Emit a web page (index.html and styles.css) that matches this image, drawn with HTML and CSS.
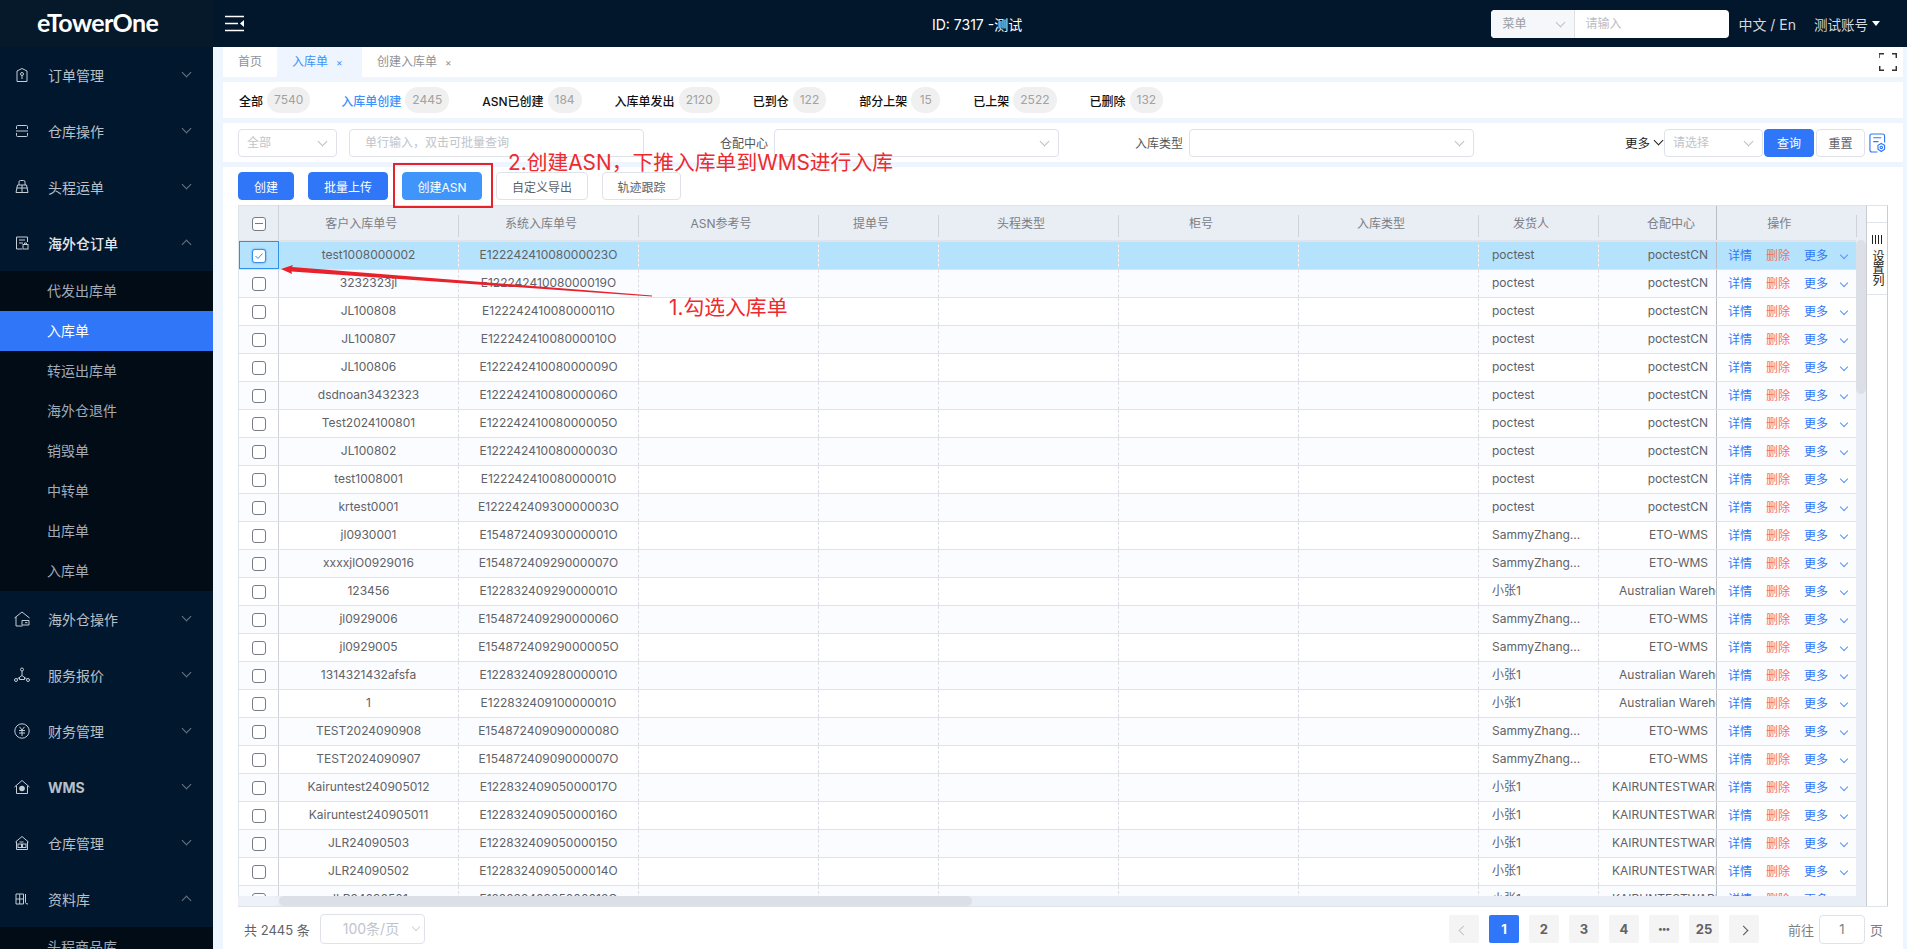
FILE: index.html
```html
<!DOCTYPE html>
<html lang="zh-CN">
<head>
  <meta charset="UTF-8">
  <title>入库单</title>
  <link rel="stylesheet" href="styles.css">
</head>
<body>
<div class="app">
  <aside class="sidebar">
    <div class="logo">eTowerOne</div>
    <ul class="menu">
      <li class="item"><svg class="ico" viewBox="0 0 16 16"><path d="M3 4 8 1.5 13 4V14.5H3Z"/><circle cx="8" cy="7" r="1.5"/><path d="M8 8.5V12"/></svg><span>订单管理</span><i class="arrow"></i></li>
      <li class="item"><svg class="ico" viewBox="0 0 16 16"><path d="M2.500 6V3.500Q2.500 2.500 3.500 2.500H12.500Q13.500 2.500 13.500 3.500V6M2 8H14M2.500 10V12.500Q2.500 13.500 3.500 13.500H12.500Q13.500 13.500 13.500 12.500V10"/></svg><span>仓库操作</span><i class="arrow"></i></li>
      <li class="item"><svg class="ico" viewBox="0 0 16 16"><path d="M5 6V3Q5 1.500 6.500 1.500H9.500Q11 1.500 11 3V6M3.500 6H12.500L14 13.500H2ZM8 6V13.500M2.500 9H13.500"/></svg><span>头程运单</span><i class="arrow"></i></li>
      <li class="item open"><svg class="ico" viewBox="0 0 16 16"><path d="M8 14H2.500V2H13.500V7M5 5H11M5 8H9"/><rect x="9" y="9.500" width="5" height="4.500"/><path d="M10.500 9.500V8H12.500V9.500"/></svg><span>海外仓订单</span><i class="arrow up"></i></li>
      <li class="sub">
        <a>代发出库单</a>
        <a class="active">入库单</a>
        <a>转运出库单</a>
        <a>海外仓退件</a>
        <a>销毁单</a>
        <a>中转单</a>
        <a>出库单</a>
        <a>入库单</a>
      </li>
      <li class="item"><svg class="ico" viewBox="0 0 16 16"><path d="M.500 7 8 1 15.500 7M2 6V15H8.500M8 9.500H15V14H8ZM11 11.700H13.500"/></svg><span>海外仓操作</span><i class="arrow"></i></li>
      <li class="item"><svg class="ico" viewBox="0 0 16 16"><circle cx="8" cy="2.500" r="1.500"/><circle cx="2" cy="13" r="1.500"/><circle cx="14" cy="13" r="1.500"/><path d="M8 4V8.500L3.300 12M8 8.500 12.700 12M5.500 10V12.500H10.500V10"/></svg><span>服务报价</span><i class="arrow"></i></li>
      <li class="item"><svg class="ico" viewBox="0 0 16 16"><circle cx="8" cy="8" r="7.200"/><path d="M5.500 3.800 8 7 10.500 3.800M5 7.500H11M5 10H11M8 7V13"/></svg><span>财务管理</span><i class="arrow"></i></li>
      <li class="item wms"><svg class="ico" viewBox="0 0 16 16"><path d="M.500 8 8 1.500 15.500 8M2.500 7V14.500H13.500V7"/><circle class="fill" cx="8" cy="9.500" r="2.800"/></svg><span>WMS</span><i class="arrow"></i></li>
      <li class="item"><svg class="ico" viewBox="0 0 16 16"><path d="M1.500 7 8 1.500 14.500 7M2.500 6.500V14.500H13.500V6.500M5.500 7H9.500"/><rect x="4" y="9" width="3.500" height="3.500"/><rect x="8.500" y="9" width="3.500" height="3.500"/></svg><span>仓库管理</span><i class="arrow"></i></li>
      <li class="item open"><svg class="ico" viewBox="0 0 16 16"><path d="M2 3H9.500V13H2ZM5.700 3V13M2 8H9.500M11.500 3V11.500Q11.500 13 14 13"/></svg><span>资料库</span><i class="arrow up"></i></li>
      <li class="sub"><a>头程商品库</a></li>
    </ul>
  </aside>

  <div class="main">
    <header class="head">
      <svg class="toggle" viewBox="0 0 19 17"><path d="M0 1.500H19M0 8.500H13M0 15.500H19"/><path class="solid" d="M19 5V12L15 8.500Z"/></svg>
      <div class="head-title">ID: 7317 -测试</div>
      <div class="head-search">
        <div class="hs-select">菜单<i class="arrow grey"></i></div>
        <div class="hs-input">请输入</div>
      </div>
      <div class="lang">中文 / En</div>
      <div class="account">测试账号<i class="caret"></i></div>
    </header>

    <div class="content">
      <div class="tabs">
        <a class="tab home">首页</a>
        <a class="tab on">入库单<b>×</b></a>
        <a class="tab">创建入库单<b>×</b></a>
        <svg class="full" viewBox="0 0 18 18"><path d="M0 5V.7H5M13 .7H17.300V5M17.300 13V17.300H13M5 17.300H.7V13"/></svg>
      </div>

      <div class="status">
        <div class="st"><span>全部</span><em>7540</em></div>
        <div class="st on"><span>入库单创建</span><em>2445</em></div>
        <div class="st"><span>ASN已创建</span><em>184</em></div>
        <div class="st"><span>入库单发出</span><em>2120</em></div>
        <div class="st"><span>已到仓</span><em>122</em></div>
        <div class="st"><span>部分上架</span><em>15</em></div>
        <div class="st"><span>已上架</span><em>2522</em></div>
        <div class="st"><span>已删除</span><em>132</em></div>
      </div>

      <div class="filter">
        <div class="field f-all ph">全部<i class="arrow grey"></i></div>
        <div class="field f-input ph">单行输入，双击可批量查询</div>
        <label class="f-label">仓配中心</label>
        <div class="field f-wide"><i class="arrow grey"></i></div>
        <label class="f-label">入库类型</label>
        <div class="field f-wide"><i class="arrow grey"></i></div>
        <div class="f-more">更多<i class="arrow dark"></i></div>
        <div class="field f-sel ph">请选择<i class="arrow grey"></i></div>
        <button class="btn primary f-q">查询</button>
        <button class="btn f-r">重置</button>
        <svg class="f-cfg" viewBox="0 0 18 21"><path d="M9 20H3Q1 20 1 18V3Q1 1 3 1H14Q16.500 1 16.500 3V10"/><path d="M4.500 5H13M4.500 9H10"/><path d="M13 11 16.500 13V17L13 19.500 9.500 17V13Z"/><circle cx="13" cy="15.200" r="1.300"/></svg>
      </div>

      <div class="panel">
        <div class="actions">
          <button class="btn primary a1">创建</button>
          <button class="btn primary a2">批量上传</button>
          <button class="btn light a3">创建ASN</button>
          <button class="btn a4">自定义导出</button>
          <button class="btn a5">轨迹跟踪</button>
        </div>

        <div class="grid-box">
          <div class="grid">
            <table>
              <colgroup>
                <col class="w-check"><col class="w-180"><col class="w-180"><col class="w-180"><col class="w-120"><col class="w-180"><col class="w-180"><col class="w-180"><col class="w-120"><col class="w-118"><col class="w-ops">
              </colgroup>
              <thead>
                <tr><th class="c-check"><span class="cb minus"></span></th><th>客户入库单号</th><th>系统入库单号</th><th>ASN参考号</th><th>提单号</th><th>头程类型</th><th>柜号</th><th>入库类型</th><th>发货人</th><th class="c-wh">仓配中心</th><th class="c-ops">操作</th></tr>
              </thead>
              <tbody>
                <tr class="sel"><td class="c-check"><span class="cb checked"><svg viewBox="0 0 14 14"><path d="M3.500 7 6 9.500 10.500 4.500"/></svg></span></td><td>test1008000002</td><td>E12224241008000023O</td><td></td><td></td><td></td><td></td><td></td><td class="c-left">poctest</td><td class="c-right">poctestCN</td><td class="c-ops"><a>详情</a><a class="del">删除</a><a>更多</a><i class="arrow blue"></i></td></tr>
                <tr><td class="c-check"><span class="cb"></span></td><td>3232323jl</td><td>E12224241008000019O</td><td></td><td></td><td></td><td></td><td></td><td class="c-left">poctest</td><td class="c-right">poctestCN</td><td class="c-ops"><a>详情</a><a class="del">删除</a><a>更多</a><i class="arrow blue"></i></td></tr>
                <tr><td class="c-check"><span class="cb"></span></td><td>JL100808</td><td>E12224241008000011O</td><td></td><td></td><td></td><td></td><td></td><td class="c-left">poctest</td><td class="c-right">poctestCN</td><td class="c-ops"><a>详情</a><a class="del">删除</a><a>更多</a><i class="arrow blue"></i></td></tr>
                <tr><td class="c-check"><span class="cb"></span></td><td>JL100807</td><td>E12224241008000010O</td><td></td><td></td><td></td><td></td><td></td><td class="c-left">poctest</td><td class="c-right">poctestCN</td><td class="c-ops"><a>详情</a><a class="del">删除</a><a>更多</a><i class="arrow blue"></i></td></tr>
                <tr><td class="c-check"><span class="cb"></span></td><td>JL100806</td><td>E12224241008000009O</td><td></td><td></td><td></td><td></td><td></td><td class="c-left">poctest</td><td class="c-right">poctestCN</td><td class="c-ops"><a>详情</a><a class="del">删除</a><a>更多</a><i class="arrow blue"></i></td></tr>
                <tr><td class="c-check"><span class="cb"></span></td><td>dsdnoan3432323</td><td>E12224241008000006O</td><td></td><td></td><td></td><td></td><td></td><td class="c-left">poctest</td><td class="c-right">poctestCN</td><td class="c-ops"><a>详情</a><a class="del">删除</a><a>更多</a><i class="arrow blue"></i></td></tr>
                <tr><td class="c-check"><span class="cb"></span></td><td>Test2024100801</td><td>E12224241008000005O</td><td></td><td></td><td></td><td></td><td></td><td class="c-left">poctest</td><td class="c-right">poctestCN</td><td class="c-ops"><a>详情</a><a class="del">删除</a><a>更多</a><i class="arrow blue"></i></td></tr>
                <tr><td class="c-check"><span class="cb"></span></td><td>JL100802</td><td>E12224241008000003O</td><td></td><td></td><td></td><td></td><td></td><td class="c-left">poctest</td><td class="c-right">poctestCN</td><td class="c-ops"><a>详情</a><a class="del">删除</a><a>更多</a><i class="arrow blue"></i></td></tr>
                <tr><td class="c-check"><span class="cb"></span></td><td>test1008001</td><td>E12224241008000001O</td><td></td><td></td><td></td><td></td><td></td><td class="c-left">poctest</td><td class="c-right">poctestCN</td><td class="c-ops"><a>详情</a><a class="del">删除</a><a>更多</a><i class="arrow blue"></i></td></tr>
                <tr><td class="c-check"><span class="cb"></span></td><td>krtest0001</td><td>E12224240930000003O</td><td></td><td></td><td></td><td></td><td></td><td class="c-left">poctest</td><td class="c-right">poctestCN</td><td class="c-ops"><a>详情</a><a class="del">删除</a><a>更多</a><i class="arrow blue"></i></td></tr>
                <tr><td class="c-check"><span class="cb"></span></td><td>jl0930001</td><td>E15487240930000001O</td><td></td><td></td><td></td><td></td><td></td><td class="c-left">SammyZhang...</td><td class="c-right">ETO-WMS</td><td class="c-ops"><a>详情</a><a class="del">删除</a><a>更多</a><i class="arrow blue"></i></td></tr>
                <tr><td class="c-check"><span class="cb"></span></td><td>xxxxjlO0929016</td><td>E15487240929000007O</td><td></td><td></td><td></td><td></td><td></td><td class="c-left">SammyZhang...</td><td class="c-right">ETO-WMS</td><td class="c-ops"><a>详情</a><a class="del">删除</a><a>更多</a><i class="arrow blue"></i></td></tr>
                <tr><td class="c-check"><span class="cb"></span></td><td>123456</td><td>E12283240929000001O</td><td></td><td></td><td></td><td></td><td></td><td class="c-left">小张1</td><td class="c-au">Australian Warehouse</td><td class="c-ops"><a>详情</a><a class="del">删除</a><a>更多</a><i class="arrow blue"></i></td></tr>
                <tr><td class="c-check"><span class="cb"></span></td><td>jl0929006</td><td>E15487240929000006O</td><td></td><td></td><td></td><td></td><td></td><td class="c-left">SammyZhang...</td><td class="c-right">ETO-WMS</td><td class="c-ops"><a>详情</a><a class="del">删除</a><a>更多</a><i class="arrow blue"></i></td></tr>
                <tr><td class="c-check"><span class="cb"></span></td><td>jl0929005</td><td>E15487240929000005O</td><td></td><td></td><td></td><td></td><td></td><td class="c-left">SammyZhang...</td><td class="c-right">ETO-WMS</td><td class="c-ops"><a>详情</a><a class="del">删除</a><a>更多</a><i class="arrow blue"></i></td></tr>
                <tr><td class="c-check"><span class="cb"></span></td><td>1314321432afsfa</td><td>E12283240928000001O</td><td></td><td></td><td></td><td></td><td></td><td class="c-left">小张1</td><td class="c-au">Australian Warehouse</td><td class="c-ops"><a>详情</a><a class="del">删除</a><a>更多</a><i class="arrow blue"></i></td></tr>
                <tr><td class="c-check"><span class="cb"></span></td><td>1</td><td>E12283240910000001O</td><td></td><td></td><td></td><td></td><td></td><td class="c-left">小张1</td><td class="c-au">Australian Warehouse</td><td class="c-ops"><a>详情</a><a class="del">删除</a><a>更多</a><i class="arrow blue"></i></td></tr>
                <tr><td class="c-check"><span class="cb"></span></td><td>TEST2024090908</td><td>E15487240909000008O</td><td></td><td></td><td></td><td></td><td></td><td class="c-left">SammyZhang...</td><td class="c-right">ETO-WMS</td><td class="c-ops"><a>详情</a><a class="del">删除</a><a>更多</a><i class="arrow blue"></i></td></tr>
                <tr><td class="c-check"><span class="cb"></span></td><td>TEST2024090907</td><td>E15487240909000007O</td><td></td><td></td><td></td><td></td><td></td><td class="c-left">SammyZhang...</td><td class="c-right">ETO-WMS</td><td class="c-ops"><a>详情</a><a class="del">删除</a><a>更多</a><i class="arrow blue"></i></td></tr>
                <tr><td class="c-check"><span class="cb"></span></td><td>Kairuntest240905012</td><td>E12283240905000017O</td><td></td><td></td><td></td><td></td><td></td><td class="c-left">小张1</td><td class="c-ka">KAIRUNTESTWAREHOUSE</td><td class="c-ops"><a>详情</a><a class="del">删除</a><a>更多</a><i class="arrow blue"></i></td></tr>
                <tr><td class="c-check"><span class="cb"></span></td><td>Kairuntest240905011</td><td>E12283240905000016O</td><td></td><td></td><td></td><td></td><td></td><td class="c-left">小张1</td><td class="c-ka">KAIRUNTESTWAREHOUSE</td><td class="c-ops"><a>详情</a><a class="del">删除</a><a>更多</a><i class="arrow blue"></i></td></tr>
                <tr><td class="c-check"><span class="cb"></span></td><td>JLR24090503</td><td>E12283240905000015O</td><td></td><td></td><td></td><td></td><td></td><td class="c-left">小张1</td><td class="c-ka">KAIRUNTESTWAREHOUSE</td><td class="c-ops"><a>详情</a><a class="del">删除</a><a>更多</a><i class="arrow blue"></i></td></tr>
                <tr><td class="c-check"><span class="cb"></span></td><td>JLR24090502</td><td>E12283240905000014O</td><td></td><td></td><td></td><td></td><td></td><td class="c-left">小张1</td><td class="c-ka">KAIRUNTESTWAREHOUSE</td><td class="c-ops"><a>详情</a><a class="del">删除</a><a>更多</a><i class="arrow blue"></i></td></tr>
                <tr><td class="c-check"><span class="cb"></span></td><td>JLR24090501</td><td>E12283240905000013O</td><td></td><td></td><td></td><td></td><td></td><td class="c-left">小张1</td><td class="c-ka">KAIRUNTESTWAREHOUSE</td><td class="c-ops"><a>详情</a><a class="del">删除</a><a>更多</a><i class="arrow blue"></i></td></tr>
              </tbody>
            </table>
            <div class="sb-v"><div class="sb-v-thumb"></div></div>
            <div class="sb-h"><div class="sb-h-left"></div><div class="sb-h-thumb"></div><div class="sb-h-right"></div></div>
          </div>
          <div class="setcol">
            <div class="setcol-top"></div>
            <div class="setcol-btn"><i class="bars"></i><span>设置列</span></div>
          </div>
        </div>

        <div class="pager">
          <span class="total">共 2445 条</span>
          <div class="size">100条/页<i class="arrow grey"></i></div>
          <div class="pages">
            <a class="pg off"><i class="arrow left"></i></a>
            <a class="pg cur">1</a>
            <a class="pg">2</a>
            <a class="pg">3</a>
            <a class="pg">4</a>
            <a class="pg dots">•••</a>
            <a class="pg">25</a>
            <a class="pg"><i class="arrow right"></i></a>
          </div>
          <span class="goto">前往</span>
          <div class="page-input">1</div>
          <span class="goto">页</span>
        </div>
      </div>
    </div>
  </div>

  <!-- annotations drawn over the screen -->
  <div class="mark-box"></div>
  <div class="note note-2">2.创建ASN，下推入库单到WMS进行入库</div>
  <div class="note note-1">1.勾选入库单</div>
  <svg class="mark-arrow" viewBox="0 0 1907 949"><path d="M281 269 293 265 292 267 652 295.500V296.500L291.500 271.500 292 274Z"/></svg>
</div>
</body>
</html>
```

FILE: styles.css
```css
* {
  margin: 0;
  padding: 0;
  box-sizing: border-box;
}

html, body {
  height: 100%;
  overflow: hidden;
}

body {
  font-family: Inter, "Noto Sans CJK SC", sans-serif;
  font-size: 12px;
  color: #606266;
}

a { text-decoration: none; }
i, em { font-style: normal; }
ul { list-style: none; }

.app {
  position: relative;
  display: flex;
  height: 949px;
  overflow: hidden;
  background: #eff5fe;
}

/* chevrons, made of two borders */
.arrow {
  display: inline-block;
  width: 6px;
  height: 6px;
  border-right: 1px solid #6b7683;
  border-bottom: 1px solid #6b7683;
  transform: rotate(45deg);
}
.arrow.up { transform: rotate(225deg); }
.arrow.left { transform: rotate(135deg); }
.arrow.right { transform: rotate(-45deg); }
.arrow.grey { border-color: #bcc0c7; }
.arrow.dark { border-color: #222; }
.arrow.blue { border-color: #5a93f5; }

/* sidebar */
.sidebar {
  width: 213px;
  flex: none;
  background: #01172e;
  overflow: hidden;
}

.logo {
  height: 47px;
  background: #05192a;
  color: #fff;
  font-family: Lato, sans-serif;
  font-weight: 700;
  font-size: 25px;
  letter-spacing: -.6px;
  line-height: 45px;
  padding-left: 37px;
}

.item {
  height: 56px;
  display: flex;
  align-items: center;
  padding-left: 14px;
  font-size: 14px;
  color: #b9c0c8;
}
.item .ico {
  width: 16px;
  height: 16px;
  margin-right: 18px;
  flex: none;
  fill: none;
  stroke: #c6cdd4;
  stroke-width: 1;
}
.item .ico .fill { fill: #c6cdd4; stroke: none; }
.item .arrow {
  margin-left: auto;
  margin-right: 23px;
  width: 7px;
  height: 7px;
  margin-top: -6px;
}
.item .arrow.up { margin-top: 2px; }
.item.open:nth-child(4) span { color: #e4e8ec; font-weight: 500; }
.item.wms span { font-weight: 700; }

.sub { background: #010c17; }
.sub a {
  display: block;
  height: 40px;
  line-height: 40px;
  padding-left: 47px;
  font-size: 14px;
  color: #a3abb7;
}
.sub a.active {
  background: #2f76f8;
  color: #fff;
}

/* top bar */
.main {
  flex: 1;
  min-width: 0;
  display: flex;
  flex-direction: column;
}

.head {
  height: 47px;
  flex: none;
  display: flex;
  align-items: center;
  background: #02162c;
  color: #fff;
  padding: 0 27px 0 12px;
}
.toggle {
  width: 19px;
  height: 17px;
  fill: none;
  stroke: #fff;
  stroke-width: 1.5;
  flex: none;
}
.toggle .solid { fill: #fff; stroke: none; }
.head-title {
  margin-left: 688px;
  font-size: 14px;
}
.head-search {
  margin-left: auto;
  width: 238px;
  height: 28px;
  display: flex;
  background: #fff;
  border-radius: 4px;
  overflow: hidden;
  color: #b9bdc4;
}
.hs-select {
  width: 84px;
  background: #f5f7fa;
  color: #9a9da3;
  border-right: 1px solid #dcdfe6;
  padding-left: 11px;
  line-height: 28px;
  position: relative;
}
.hs-select .arrow {
  position: absolute;
  right: 10px;
  top: 9px;
  width: 7px;
  height: 7px;
}
.hs-input {
  padding-left: 10px;
  line-height: 28px;
}
.lang {
  margin-left: 9px;
  font-size: 14px;
  color: #d5d9de;
}
.account {
  margin-left: 18px;
  font-size: 13.500px;
  color: #d5d9de;
  display: flex;
  align-items: center;
}
.caret {
  margin-left: 4px;
  border-left: 4px solid transparent;
  border-right: 4px solid transparent;
  border-top: 5px solid #fff;
}

/* page content */
.content {
  flex: 1;
  min-height: 0;
  display: flex;
  flex-direction: column;
  gap: 5px;
  padding: 0 4px 0 10px;
}

.tabs {
  height: 30px;
  flex: none;
  display: flex;
  align-items: center;
  background: #fff;
  color: #8f9298;
}
.tab {
  height: 30px;
  line-height: 30px;
  padding: 0 15px;
  color: #8f9298;
  white-space: nowrap;
}
.tab.home { width: 54px; padding-left: 15px; }
.tab b {
  font-weight: 400;
  font-size: 10px;
  margin-left: 8px;
}
.tab.on {
  width: 85px;
  background: #eff5fe;
  color: #3c92fb;
}
.full {
  margin-left: auto;
  margin-right: 6px;
  width: 18px;
  height: 18px;
  fill: none;
  stroke: #333;
  stroke-width: 1.5;
}

.status {
  height: 36px;
  flex: none;
  display: flex;
  align-items: center;
  background: #fff;
  padding-left: 16px;
  gap: 33px;
}
.st {
  display: flex;
  align-items: center;
  gap: 4px;
  color: #111;
  font-weight: 500;
}
.st:first-child { margin-right: -2px; }
.st.on { color: #3c92fb; }
.st em {
  min-width: 29px;
  height: 26px;
  line-height: 26px;
  padding: 0 7px;
  border-radius: 13px;
  background: #f0f0f0;
  color: #a2a2a2;
  font-weight: 400;
  text-align: center;
}

.filter {
  height: 39px;
  flex: none;
  display: flex;
  align-items: center;
  background: #fff;
  padding: 0 17px 0 15px;
}
.field {
  position: relative;
  height: 28px;
  line-height: 26px;
  border: 1px solid #dfe2e8;
  border-radius: 4px;
  background: #fff;
  padding-left: 8px;
}
.field .arrow {
  position: absolute;
  right: 10px;
  top: 8px;
  width: 7px;
  height: 7px;
}
.ph { color: #c0c4cc; }
.f-all { width: 99px; }
.f-input {
  width: 295px;
  margin-left: 12px;
  padding-left: 15px;
}
.f-label {
  margin-left: 76px;
  margin-right: 6px;
  color: #555;
}
.f-wide { width: 285px; }
.f-more {
  margin-left: auto;
  margin-right: 1px;
  color: #222;
  font-size: 12.500px;
  display: flex;
  align-items: center;
}
.f-more .arrow {
  width: 7px;
  height: 7px;
  margin: -4px 1px 0 5px;
}
.f-sel { width: 99px; }
.f-q {
  width: 50px;
  margin-left: 1px;
}
.f-r {
  width: 49px;
  margin-left: 2px;
}
.f-cfg {
  width: 17px;
  height: 20px;
  margin-left: 4px;
  fill: none;
  stroke: #2f76f8;
  stroke-width: 1.2;
}

.btn {
  height: 28px;
  font: inherit;
  border: 1px solid #dfe2e8;
  border-radius: 4px;
  background: #fff;
  color: #606266;
}
.btn.primary {
  background: #2f76f8;
  border-color: #2f76f8;
  color: #fff;
}
.btn.light {
  background: #4095fb;
  border-color: #4095fb;
  color: #fff;
}

.panel {
  flex: 1;
  min-height: 0;
  display: flex;
  flex-direction: column;
  background: #fff;
  padding: 5px 15px 0;
}

.actions {
  display: flex;
  gap: 14px;
  height: 28px;
  flex: none;
  margin-bottom: 5px;
}
.a1 { width: 56px; }
.a2, .a3 { width: 80px; }
.a4 { width: 92px; }
.a5 { width: 79px; }

/* table */
.grid-box {
  display: flex;
  height: 702px;
  flex: none;
  border-bottom: 1px solid #dfe3ea;
}
.grid {
  position: relative;
  width: 1628px;
  flex: none;
  overflow: hidden;
}
table {
  width: 1628px;
  table-layout: fixed;
  border-collapse: collapse;
}
.w-check { width: 40px; }
.w-180 { width: 180px; }
.w-120 { width: 120px; }
.w-118 { width: 118px; }
.w-ops { width: 150px; }

th {
  position: relative;
  height: 35px;
  padding-right: 15px;
  background: #e9edf4;
  border-top: 1px solid #dfe3ea;
  border-bottom: 2px solid #dfe3ea;
  font-weight: 400;
  color: #7b7e85;
  text-align: center;
}
th::after {
  content: "";
  position: absolute;
  right: 0;
  top: 9px;
  height: 22px;
  border-right: 1px solid #cfd2d8;
}
th.c-check {
  padding: 0;
  border-left: 1px solid #dfe3ea;
  border-right: 1px solid #cfd2d8;
}
th.c-check::after { display: none; }
th.c-wh { text-align: right; padding-right: 21px; }
th.c-wh::after { display: none; }
th.c-ops { border-left: 1px solid #b9bcc3; padding-right: 25px; }
th.c-ops::after { right: 10px; }

td {
  height: 28px;
  padding: 0 8px 1px;
  text-align: center;
  white-space: nowrap;
  overflow: hidden;
  border-bottom: 1px solid #dfe3ea;
  border-right: 1px dashed #dadde4;
  line-height: 26px;
}
tbody tr:nth-child(even) td { background: #fbfcff; }
tbody tr.sel td { background: #b5e3fd; }

td.c-check {
  padding: 0;
  border-left: 1px solid #dfe3ea;
  border-right: 1px solid #cfd2d8;
}
.sel td.c-check { outline: 1px solid #3190e8; outline-offset: -1px; }
td.c-left { text-align: left; padding-left: 13px; }
td.c-right { text-align: right; border-right: 0; }
td.c-au { text-align: left; padding: 0 0 1px 20px; border-right: 0; }
td.c-ka { text-align: left; padding: 0 0 1px 13px; border-right: 0; }
td.c-ops {
  text-align: left;
  border-left: 1px solid #b9bcc3;
  border-right: 0;
  padding: 1px 0 0 11px;
}
.c-ops a {
  color: #2f76f8;
  margin-right: 14px;
}
.c-ops a.del { color: #f56c6c; }
.c-ops a:nth-of-type(3) { margin-right: 13px; }
.c-ops .arrow {
  width: 6px;
  height: 6px;
  vertical-align: 2px;
}

.cb {
  display: inline-block;
  width: 14px;
  height: 14px;
  border: 1px solid #777b82;
  border-radius: 3px;
  background: #fff;
  vertical-align: middle;
  position: relative;
}
.cb.minus::after {
  content: "";
  position: absolute;
  left: 2px;
  right: 2px;
  top: 5px;
  border-top: 1px solid #777b82;
}
.cb.checked {
  border-color: #3c8fe8;
  box-shadow: 0 0 2px #3190e8;
}
.cb svg {
  position: absolute;
  left: -1px;
  top: -1px;
  width: 14px;
  height: 14px;
  fill: none;
  stroke: #3190e8;
}

.sb-v {
  position: absolute;
  right: 0;
  top: 35px;
  bottom: 0;
  width: 10px;
  background: #e9edf5;
}
.sb-v-thumb {
  height: 154px;
  background: #dcdfe6;
  border-radius: 5px;
}
.sb-h {
  position: absolute;
  left: 0;
  right: 0;
  bottom: 0;
  height: 10px;
  background: #e9edf5;
  display: flex;
}
.sb-h-left {
  width: 40px;
  background: #eef1f7;
  border-radius: 5px;
}
.sb-h-thumb {
  width: 693px;
  margin-left: 1px;
  background: #dcdfe6;
  border-radius: 5px;
}
.sb-h-right {
  width: 149px;
  margin-left: auto;
  background: #e9edf5;
  border-radius: 5px;
}

.setcol {
  width: 22px;
  flex: none;
  border-left: 1px solid #c9ccd2;
  border-right: 1px solid #c9ccd2;
  border-top: 1px solid #dfe3ea;
}
.setcol-top {
  height: 17px;
  border-bottom: 1px solid #dfe3ea;
}
.setcol-btn {
  height: 72px;
  border-bottom: 1px solid #dfe3ea;
  display: flex;
  flex-direction: column;
  align-items: center;
  padding-top: 12px;
  color: #222;
}
.bars {
  width: 10px;
  height: 9px;
  flex: none;
  background: repeating-linear-gradient(90deg, #222 0 1px, transparent 1px 3px);
}
.setcol-btn span {
  writing-mode: vertical-rl;
  flex: none;
  margin-top: 6px;
  line-height: 14px;
}

/* pager */
.pager {
  flex: none;
  height: 30px;
  margin-top: 7px;
  display: flex;
  align-items: center;
  font-size: 13px;
}
.total { margin-left: 6px; }
.size {
  position: relative;
  width: 105px;
  height: 30px;
  line-height: 28px;
  margin-left: 10px;
  padding-left: 22px;
  border: 1px solid #dfe2e8;
  border-radius: 4px;
  font-size: 14px;
  color: #c0c4cc;
}
.size .arrow {
  position: absolute;
  right: 5px;
  top: 9px;
  width: 6px;
  height: 6px;
  border-color: #d0d3d9;
}
.pages {
  margin-left: auto;
  display: flex;
  gap: 10px;
}
.pg {
  width: 30px;
  height: 28px;
  line-height: 28px;
  text-align: center;
  background: #f4f4f5;
  border-radius: 2px;
  color: #606266;
  font-weight: 700;
}
.pg.dots {
  font-size: 9px;
  letter-spacing: -.5px;
}
.pg.off .arrow { border-color: #c0c4cc; }
.pg .arrow {
  width: 7px;
  height: 7px;
  border-color: #555;
}
.pg.cur {
  background: #2f76f8;
  color: #fff;
}
.goto { color: #7b7e85; }
.pages + .goto { margin-left: 29px; }
.page-input {
  width: 46px;
  height: 29px;
  line-height: 27px;
  margin: 0 5px;
  text-align: center;
  border: 1px solid #dfe2e8;
  border-radius: 4px;
  color: #7b7e85;
}
.page-input + .goto { margin-right: 5px; }

/* red annotations */
.mark-box {
  position: absolute;
  left: 393px;
  top: 163px;
  width: 100px;
  height: 45px;
  border: 2px solid #e8222a;
}
.note {
  position: absolute;
  font-size: 20.800px;
  line-height: 24px;
  color: #ee2a2f;
  white-space: nowrap;
}
.note-2 { left: 508px; top: 151px; }
.note-1 { left: 669px; top: 296px; }
.mark-arrow {
  position: absolute;
  left: 0;
  top: 0;
  width: 1907px;
  height: 949px;
  fill: #e8212b;
  pointer-events: none;
}
```
